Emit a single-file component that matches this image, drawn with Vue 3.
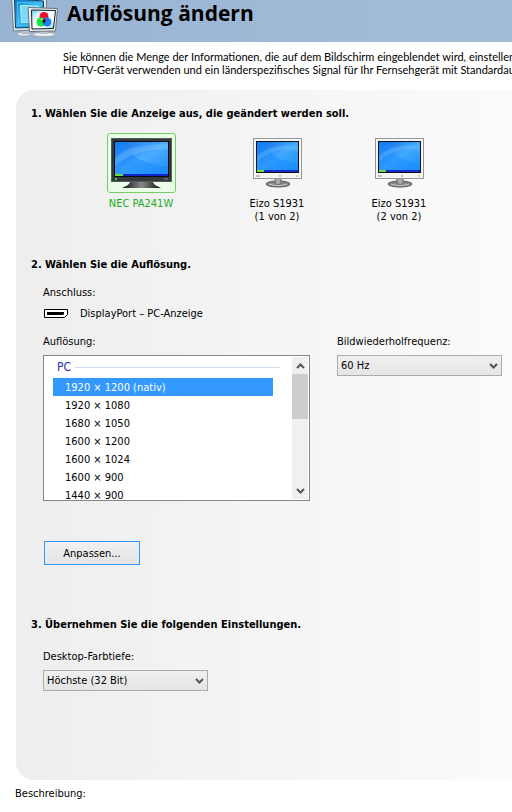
<script setup>
import { computed, onMounted, ref } from "vue";

const displays = [
  { id: "nec", lines: ["NEC PA241W"], wide: true },
  { id: "eizo1", lines: ["Eizo S1931", "(1 von 2)"], wide: false },
  { id: "eizo2", lines: ["Eizo S1931", "(2 von 2)"], wide: false },
];

const resolutions = [
  "1920 × 1200 (nativ)",
  "1920 × 1080",
  "1680 × 1050",
  "1600 × 1200",
  "1600 × 1024",
  "1600 × 900",
  "1440 × 900",
  "1366 × 768",
  "1360 × 768",
  "1280 × 1024",
  "1280 × 960",
  "1280 × 800",
  "1280 × 768",
  "1280 × 720",
  "1152 × 864",
  "1024 × 768",
  "800 × 600",
  "640 × 480",
];

const selectedDisplay = ref("nec");
const resolution = ref(resolutions[0]);
const frequency = ref("60");
const depth = ref("32");

const list = ref(null);
const scrollTop = ref(0);
const viewHeight = ref(144);
const fullHeight = ref(346);

const thumbStyle = computed(() => ({
  height: `${(viewHeight.value / fullHeight.value) * 100}%`,
  top: `${(scrollTop.value / fullHeight.value) * 100}%`,
}));

function updateScroll() {
  scrollTop.value = list.value.scrollTop;
  viewHeight.value = list.value.clientHeight;
  fullHeight.value = list.value.scrollHeight;
}

function scrollList(amount) {
  list.value.scrollTop += amount;
}

onMounted(updateScroll);
</script>

<template>
  <div class="page">
    <header class="header">
      <svg class="header-icon" width="50" height="38" viewBox="0 0 50 38" aria-hidden="true">
        <defs>
          <linearGradient id="head-screen" x1="0" y1="0" x2="1" y2="1">
            <stop offset="0" stop-color="#0878c8" />
            <stop offset="0.5" stop-color="#38b4f0" />
            <stop offset="1" stop-color="#0a6cc0" />
          </linearGradient>
          <linearGradient id="head-front" x1="0" y1="0" x2="1" y2="1">
            <stop offset="0" stop-color="#58c8f0" />
            <stop offset="0.3" stop-color="#f4fcff" />
            <stop offset="0.75" stop-color="#f4fcff" />
            <stop offset="1" stop-color="#48bce8" />
          </linearGradient>
        </defs>
        <ellipse cx="14" cy="34" rx="7" ry="2" fill="#e2e6ea" stroke="#8b97a2" stroke-width="0.6" />
        <path d="M12 29h7v5h-7z" fill="#b4bec8" />
        <path d="M1.500 -3L36.500 -1V29L3.500 31z" fill="#e4ebf0" stroke="#72808c" />
        <path d="M4.500 -1L33.500 1V27L5.500 28z" fill="url(#head-screen)" stroke="#123b64" />
        <path d="M7.500 2.500L31 3.500V25L8.500 25.500z" fill="none" stroke="#4cc8f4" />
        <path d="M10.500 5.500L29 6V22L11.500 22.500z" fill="#7ed8f8" stroke="#b4f0fc" />
        <ellipse cx="34" cy="34.500" rx="12" ry="2.200" fill="#e8ecef" stroke="#8996a0" stroke-width="0.7" />
        <path d="M30 30h8v4h-8z" fill="#bac4cc" />
        <path d="M18 7.500L47.500 8.500L45.500 31L19.500 31.500z" fill="#edf1f3" stroke="#66727c" />
        <path d="M21.500 10L45.500 10.500L43.500 28.500L22 29z" fill="url(#head-front)" stroke="#101c28" />
        <circle cx="34" cy="16.500" r="4.500" fill="#f0102c" />
        <circle cx="31" cy="22" r="4.500" fill="#10e840" />
        <circle cx="37" cy="22" r="4.500" fill="#1784f4" />
        <path d="M30.500 19a5 5 0 0 1 3.500 .5v1.500a5 5 0 0 1-3.500-2z" fill="#ffe624" />
        <path d="M37.500 19a5 5 0 0 0-3.500 .5v1.500a5 5 0 0 0 3.500-2z" fill="#cb28df" />
        <path d="M34 18.500l2 2.500-2 2.500-2-2.500z" fill="#15171a" />
      </svg>
      <h1>Auflösung ändern</h1>
    </header>

    <p class="intro">
      Sie können die Menge der Informationen, die auf dem Bildschirm eingeblendet wird, einstellen und<br />
      HDTV-Gerät verwenden und ein länderspezifisches Signal für Ihr Fernsehgerät mit Standardauflösung
    </p>

    <main class="panel">
      <section>
        <h2>1. Wählen Sie die Anzeige aus, die geändert werden soll.</h2>
        <div class="displays">
          <button
            v-for="display in displays"
            :key="display.id"
            type="button"
            class="display"
            :class="{ wide: display.wide, selected: display.id === selectedDisplay }"
            :aria-pressed="display.id === selectedDisplay"
            @click="selectedDisplay = display.id"
          >
            <span class="display-frame">
              <svg v-if="display.wide" width="61" height="51" viewBox="0 0 61 51" aria-hidden="true">
                <defs>
                  <linearGradient id="wide-screen" x1="0" y1="0" x2="1" y2="1">
                    <stop offset="0" stop-color="#126ce8" />
                    <stop offset="0.5" stop-color="#4cadff" />
                    <stop offset="1" stop-color="#168cfb" />
                  </linearGradient>
                  <linearGradient id="wide-stand" x1="0" y1="0" x2="1" y2="0">
                    <stop offset="0" stop-color="#111" />
                    <stop offset="0.5" stop-color="#888" />
                    <stop offset="1" stop-color="#111" />
                  </linearGradient>
                </defs>
                <path d="M20 43h21l3 4 6 3H11l6-3z" fill="url(#wide-stand)" />
                <rect x="0.500" y="0.500" width="60" height="43" fill="#34383b" stroke="#555b5f" />
                <rect x="3" y="3" width="55" height="36" fill="#080d12" />
                <rect x="4" y="4" width="53" height="33" fill="url(#wide-screen)" />
                <path d="M4 4h11c-1 10 12 21 42 25v8H4z" fill="#1688fb" opacity="0.5" />
                <path d="M4 20C14 10 28 7 57 6v5C35 11 17 16 4 28z" fill="#8bd1ff" opacity="0.3" />
                <rect x="4" y="36" width="53" height="2" fill="#1024cb" />
                <rect x="4" y="36" width="8" height="2" fill="#69df35" />
                <path d="M4 41h2" stroke="#28d848" stroke-width="2" />
                <path d="M53 41h4" stroke="#888" />
              </svg>
              <svg v-else width="49" height="51" viewBox="0 0 49 51" aria-hidden="true">
                <defs>
                  <linearGradient :id="`screen-${display.id}`" x1="0" y1="0" x2="1" y2="1">
                    <stop offset="0" stop-color="#1268e4" />
                    <stop offset="0.5" stop-color="#42a8ff" />
                    <stop offset="1" stop-color="#168df8" />
                  </linearGradient>
                </defs>
                <ellipse cx="25" cy="46" rx="12" ry="3" fill="#868686" stroke="#555" />
                <path d="M22 40h6v5c-2 2-4 2-6 0z" fill="#aaa" stroke="#666" />
                <path d="M16 46c5 2 13 2 18 0" fill="none" stroke="#ccc" />
                <rect x="0.500" y="0.500" width="48" height="40" fill="#f5f5f5" stroke="#92979b" />
                <rect x="3" y="3" width="43" height="32" fill="#09101c" />
                <rect x="4" y="4" width="41" height="29" :fill="`url(#screen-${display.id})`" />
                <path d="M4 4h9c0 10 10 18 32 22v7H4z" fill="#158bff" opacity="0.5" />
                <path d="M4 18C12 10 25 7 45 7v6C28 9 15 14 4 24z" fill="#7bc9ff" opacity="0.3" />
                <rect x="4" y="32" width="41" height="2" fill="#1628cf" />
                <rect x="4" y="32" width="7" height="2" fill="#6fdf36" />
                <path d="M3 38h4M26 38h2" stroke="#888" />
                <circle cx="44" cy="38" r="1" fill="#c5cf49" />
              </svg>
            </span>
            <span v-for="line in display.lines" :key="line" class="display-name">{{ line }}</span>
          </button>
        </div>
      </section>

      <section class="resolution-section">
        <h2>2. Wählen Sie die Auflösung.</h2>
        <div class="section-body">
          <p class="connector-label">Anschluss:</p>
          <p class="connector">
            <svg width="24" height="9" viewBox="0 0 24 9" aria-hidden="true">
              <path d="M.500 .500h23v5l-3 3H.500z" fill="#fff" stroke="#000" />
              <path d="M3 3h17v2l-1 1H3z" fill="#000" />
            </svg>
            DisplayPort – PC-Anzeige
          </p>

          <div class="settings">
            <div class="resolution-field">
              <span id="resolution-label" class="field-label">Auflösung:</span>
              <div class="listbox">
                <div
                  ref="list"
                  class="list"
                  role="radiogroup"
                  aria-labelledby="resolution-label"
                  @scroll="updateScroll"
                >
                  <div class="group">PC</div>
                  <label
                    v-for="item in resolutions"
                    :key="item"
                    class="option"
                    :class="{ active: item === resolution }"
                  >
                    <input v-model="resolution" type="radio" name="resolution" :value="item" />
                    {{ item }}
                  </label>
                </div>
                <div class="scrollbar">
                  <button type="button" aria-label="Nach oben" @click="scrollList(-18)">
                    <svg width="9" height="6" viewBox="0 0 9 6"><path d="M1 5l3.500-3.500L8 5" /></svg>
                  </button>
                  <div class="track">
                    <div class="thumb" :style="thumbStyle"></div>
                  </div>
                  <button type="button" aria-label="Nach unten" @click="scrollList(18)">
                    <svg width="9" height="6" viewBox="0 0 9 6"><path d="M1 1l3.500 3.500L8 1" /></svg>
                  </button>
                </div>
              </div>
            </div>

            <div class="frequency-field">
              <label class="field-label" for="frequency">Bildwiederholfrequenz:</label>
              <div class="select">
                <select id="frequency" v-model="frequency">
                  <option value="60">60 Hz</option>
                  <option value="59">59 Hz</option>
                </select>
                <svg width="9" height="6" viewBox="0 0 9 6"><path d="M1 1l3.500 3.500L8 1" /></svg>
              </div>
            </div>
          </div>

          <button type="button" class="customize">Anpassen...</button>
        </div>
      </section>

      <section class="apply-section">
        <h2>3. Übernehmen Sie die folgenden Einstellungen.</h2>
        <div class="section-body">
          <label class="field-label depth-label" for="depth">Desktop-Farbtiefe:</label>
          <div class="select">
            <select id="depth" v-model="depth">
              <option value="32">Höchste (32 Bit)</option>
              <option value="16">Mittlere (16 Bit)</option>
            </select>
            <svg width="9" height="6" viewBox="0 0 9 6"><path d="M1 1l3.500 3.500L8 1" /></svg>
          </div>
        </div>
      </section>
    </main>

    <footer class="footer">Beschreibung:</footer>
  </div>
</template>

<style>
body {
  margin: 0;
  background: #fff;
}
</style>

<style scoped>
.page {
  overflow: hidden;
  color: #000;
  font-family: "DejaVu Sans Condensed", "DejaVu Sans", sans-serif;
  font-size: 11px;
  line-height: 13px;
}

h1,
h2,
p {
  margin: 0;
}

button,
select {
  font: inherit;
  color: inherit;
}

.header {
  display: flex;
  gap: 7px;
  height: 42px;
  padding-left: 10px;
  background: linear-gradient(90deg, #99b3d3, #a3bdd9);
}

.header-icon {
  flex: none;
}

h1 {
  font-family: "Open Sans", sans-serif;
  font-size: 21px;
  font-weight: 700;
  line-height: 26px;
  white-space: nowrap;
}

.intro {
  padding: 8px 0 14px 63px;
  font-family: Lato, "Liberation Sans", sans-serif;
  white-space: nowrap;
}

.panel {
  margin-left: 16px;
  padding: 17px 10px 89px 15px;
  border-radius: 18px 0 0 18px;
  background: linear-gradient(90deg, #eee, #fbfbfb);
}

h2 {
  font-size: 11px;
  font-weight: 700;
  line-height: 13px;
}

.displays {
  display: flex;
  gap: 62px;
  padding: 13px 0 0 66px;
}

.display {
  display: flex;
  flex-direction: column;
  align-items: center;
  width: 60px;
  padding: 0;
  border: 0;
  background: none;
  white-space: nowrap;
}

.display.wide {
  width: 88px;
}

.display-frame {
  display: flex;
  justify-content: center;
  box-sizing: border-box;
  height: 60px;
  margin-bottom: 4px;
  padding: 4px 3px;
  border: 1px solid transparent;
  border-radius: 3px;
}

.selected .display-frame {
  border-color: #74cf67;
  background: #e9fde7;
}

.selected {
  color: #19ad22;
}

.resolution-section {
  margin-top: 35px;
}

.section-body {
  padding-left: 12px;
}

.connector-label {
  margin-top: 15px;
}

.connector {
  display: flex;
  align-items: center;
  gap: 12px;
  margin: 8px 0 15px;
  padding-left: 1px;
}

.settings {
  display: flex;
  gap: 27px;
}

.resolution-field {
  flex: 0 1 267px;
}

.field-label {
  display: block;
  margin-bottom: 7px;
}

.listbox {
  display: flex;
  box-sizing: border-box;
  height: 146px;
  border: 1px solid #828790;
  background: #fff;
}

.list {
  position: relative;
  flex: 1;
  overflow-y: scroll;
  scrollbar-width: none;
  padding: 0 11px 0 9px;
}

.group {
  display: flex;
  align-items: center;
  gap: 4px;
  height: 22px;
  padding-left: 4px;
  color: #1b2fae;
  font-size: 12px;
}

.group::after {
  content: "";
  flex: 1;
  height: 1px;
  background: #d0dfee;
}

.option {
  display: block;
  margin-right: 7px;
  padding: 2px 0 0 12px;
  line-height: 16px;
}

.option.active {
  background: #3399ff;
  color: #fff;
}

.option input {
  position: absolute;
  margin: 0;
  opacity: 0;
  pointer-events: none;
}

.scrollbar {
  display: flex;
  flex-direction: column;
  width: 16px;
  margin: 1px;
  background: #f0f0f0;
}

.scrollbar button {
  display: flex;
  align-items: center;
  justify-content: center;
  height: 17px;
  padding: 0;
  border: 0;
  background: none;
}

.scrollbar svg,
.select svg {
  fill: none;
  stroke: #555;
  stroke-width: 2;
}

.track {
  position: relative;
  flex: 1;
}

.thumb {
  position: absolute;
  left: 0;
  right: 0;
  background: #cdcdcd;
}

.select {
  position: relative;
  width: 165px;
}

.select select {
  width: 100%;
  height: 21px;
  padding: 0 20px 0 3px;
  border: 1px solid #acacac;
  border-radius: 0;
  background: linear-gradient(#f0f0f0, #e5e5e5);
  appearance: none;
}

.select svg {
  position: absolute;
  top: 8px;
  right: 4px;
  pointer-events: none;
}

.customize {
  display: block;
  width: 96px;
  height: 24px;
  margin: 40px 0 0 1px;
  padding: 0;
  border: 1px solid #3399ff;
  background: linear-gradient(#f0f0f0, #e5e5e5);
}

.apply-section {
  margin-top: 53px;
}

.depth-label {
  margin-top: 19px;
}

.footer {
  padding: 7px 15px 12px;
}
</style>
